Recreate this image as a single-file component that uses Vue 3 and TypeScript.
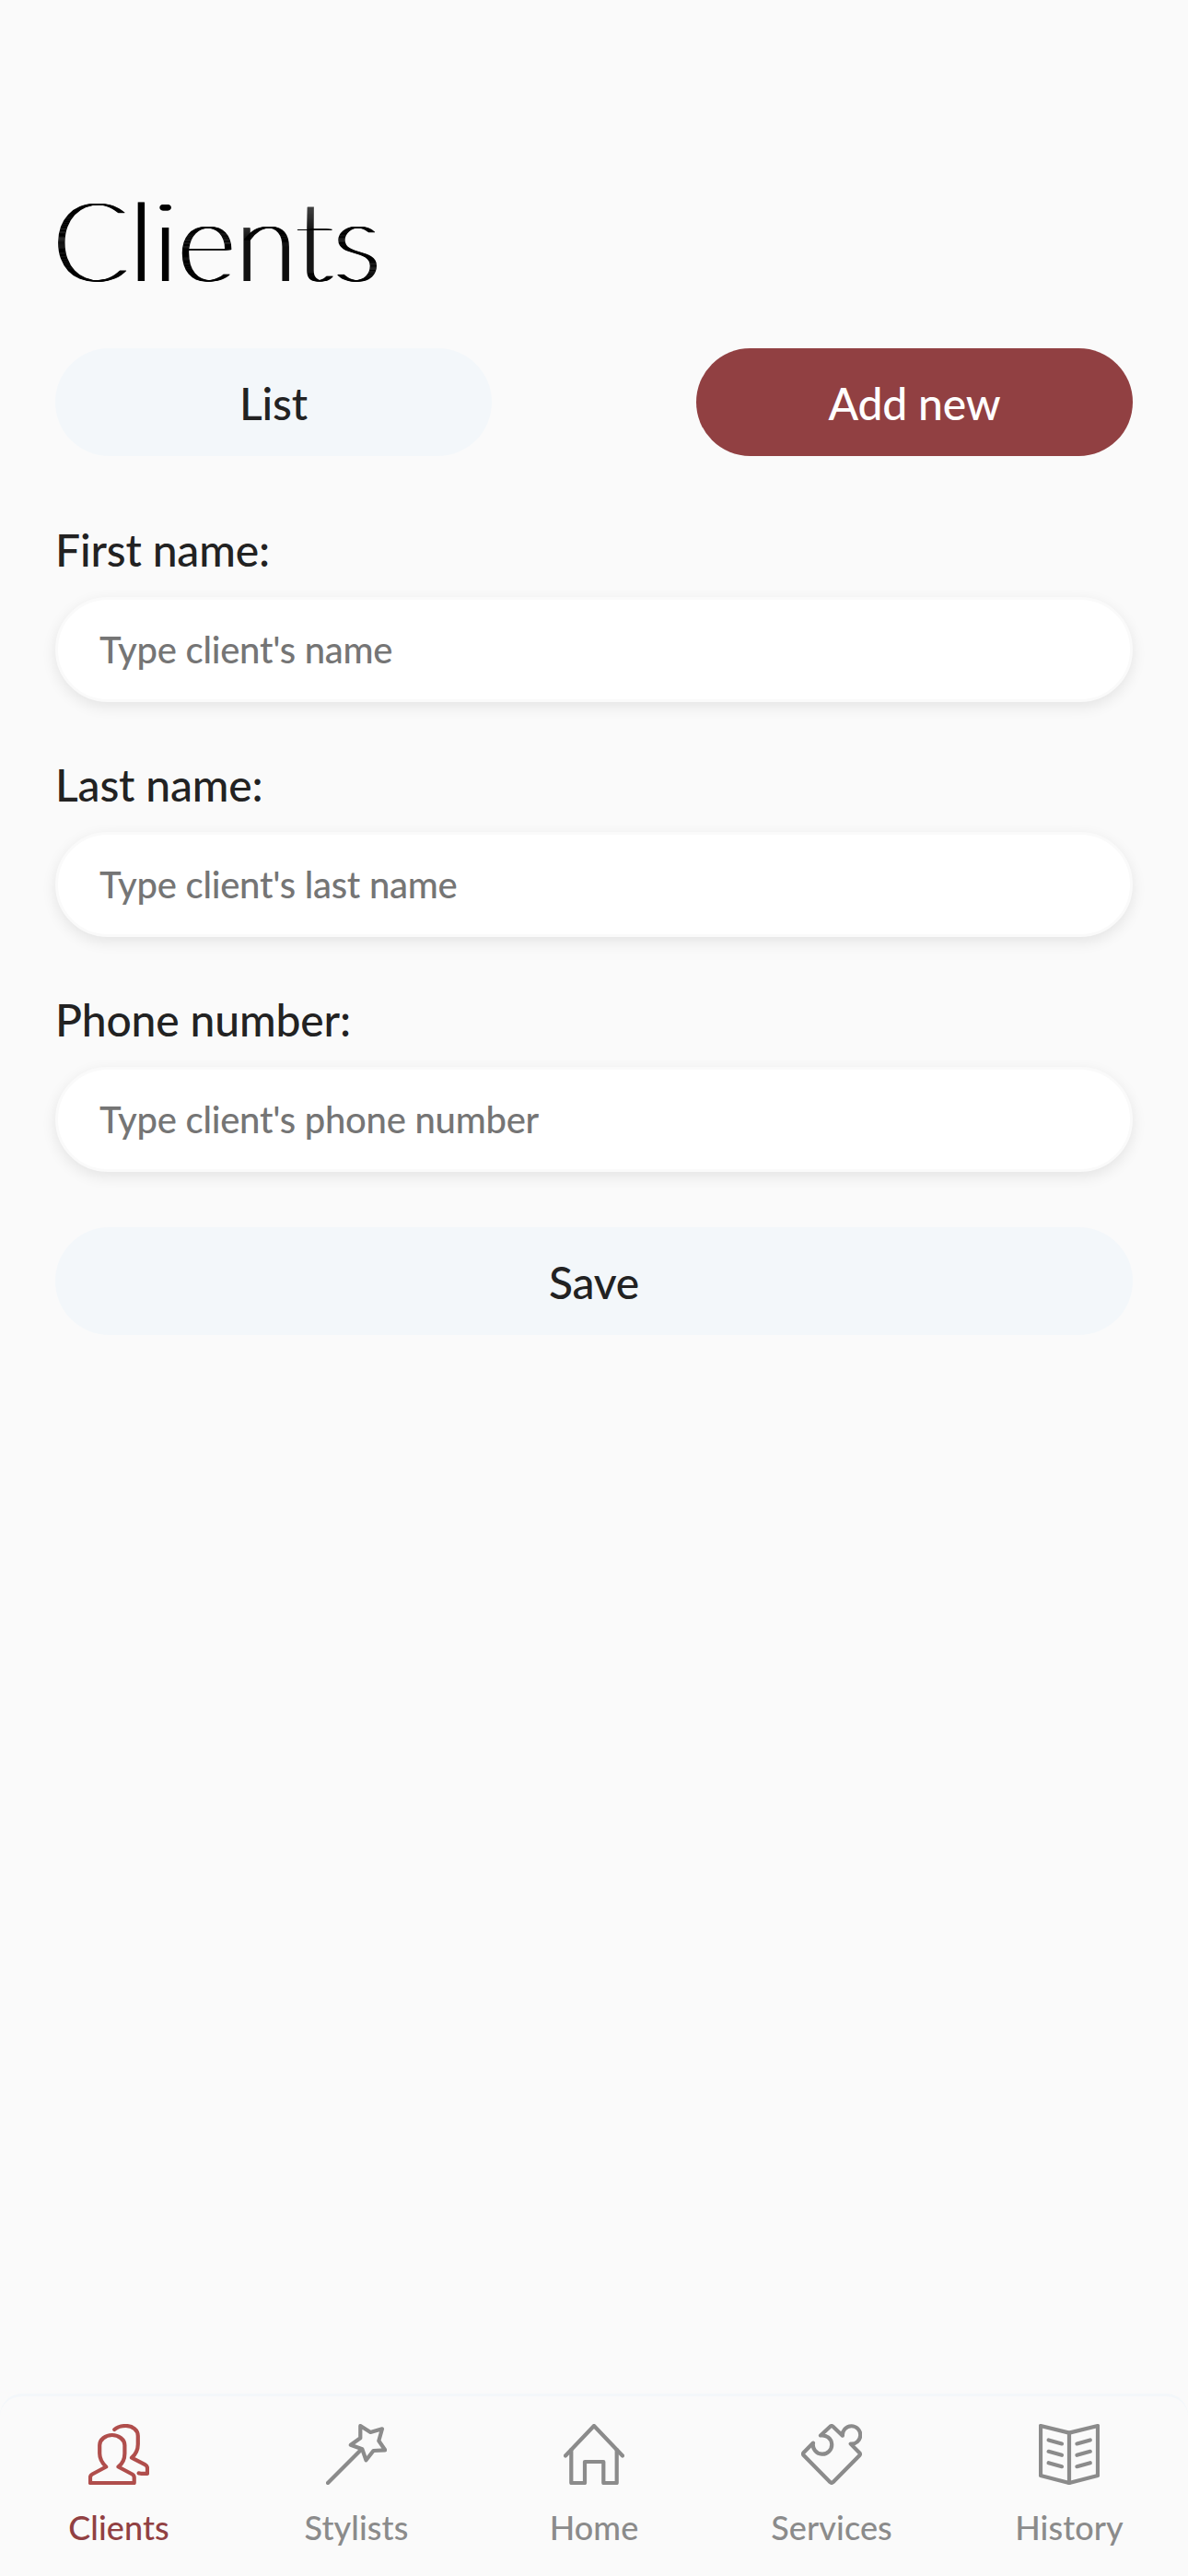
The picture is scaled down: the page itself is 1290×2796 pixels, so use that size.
<script setup lang="ts">
import { ref } from 'vue'

interface Field {
  id: string
  label: string
  placeholder: string
}

interface Tab {
  name: string
  paths: string[]
}

const fields: Field[] = [
  { id: 'first', label: 'First name:', placeholder: "Type client's name" },
  { id: 'last', label: 'Last name:', placeholder: "Type client's last name" },
  { id: 'phone', label: 'Phone number:', placeholder: "Type client's phone number" },
]

const tabs: Tab[] = [
  {
    name: 'Clients',
    paths: [
      'M25.7 12C33 12 39.4 17 39.4 23V32C39.4 38 36.5 43.5 32.5 46.5L47.5 54.5Q49.7 55.8 49.7 58V64H2V58Q2 55.8 4.2 54.5L19.2 46.5C15 42.5 12.2 38 12.2 32V23C12.2 17 18.5 12 25.7 12Z',
      'M28.3 6C31 3.6 35 2 40.7 2C48 2 53.8 6.5 53.8 13V22C53.8 28 50.8 33.4 47 36.7L61.5 44.2Q64 45.5 64 48V53.8H56.8L54.6 53.4',
    ],
  },
  {
    name: 'Stylists',
    paths: [
      'M37.3 2L48.3 9L61 5.3L57.3 18.3L64.2 28.3L51.5 29L43.5 39.3L39.3 27.3L26.8 22.8L37.3 15.3Z',
      'M38 28L2 64',
    ],
  },
  {
    name: 'Home',
    paths: ['M2 34.5L33 2L64 34.5', 'M8.3 28V64H23V41H43.3V64H57.7V28'],
  },
  {
    name: 'Services',
    paths: [
      'M13 20.5L2.7 31Q1.4 32.5 2.7 34L31.5 63.2Q33 64.5 34.5 63.2L63.2 34.3Q64.6 32.8 63.2 31.3L53.7 21.6A9.7 9.7 0 1 0 44.9 12.7L34.5 2.8Q33 1.4 31.5 2.7L21 12.5A10.2 10.2 0 1 1 13 20.5Z',
    ],
  },
  {
    name: 'History',
    paths: [
      'M33 9.6L2 2V56L33 64L64 56V2Z',
      'M33 9.6V64',
      'M10.6 17.4L25 21.4M10.6 29.8L25 33.8M10.6 42.2L25 46.2',
      'M41.4 21.4L55.8 17.4M41.4 33.8L55.8 29.8M41.4 46.2L55.8 42.2',
    ],
  },
]

const active = ref('Clients')
</script>

<template>
  <div class="screen">
    <main class="content">
      <h1 class="title">Clients</h1>
      <div class="switch">
        <button class="btn half">List</button>
        <button class="btn half primary">Add new</button>
      </div>
      <form class="form" @submit.prevent>
        <div v-for="f in fields" :key="f.id" class="field">
          <label class="label" :for="f.id">{{ f.label }}</label>
          <input :id="f.id" class="input" type="text" :placeholder="f.placeholder" />
        </div>
        <button class="btn">Save</button>
      </form>
    </main>
    <nav class="tabs">
      <a
        v-for="t in tabs"
        :key="t.name"
        class="tab"
        :class="{ active: t.name === active }"
        @click="active = t.name"
      >
        <svg class="icon" viewBox="0 0 66 66">
          <path v-for="(d, i) in t.paths" :key="i" :d="d" />
        </svg>
        <span class="caption">{{ t.name }}</span>
      </a>
    </nav>
  </div>
</template>

<style>
body {
  margin: 0;
  background: #fafafa;
}
</style>

<style scoped>
.screen {
  box-sizing: border-box;
  width: 1290px;
  height: 2796px;
  display: flex;
  flex-direction: column;
  background: #fafafa;
  color: #222;
  font-family: Lato, "Liberation Sans", sans-serif;
  font-weight: 500;
}

.content {
  flex: 1;
  padding: 187px 60px 0;
}

/* Sideways shadows thicken only the vertical stems, for a high-contrast display look */
.title {
  margin: 0 0 0 -5px;
  height: 191px;
  line-height: 144px;
  font-size: 119px;
  font-weight: 100;
  letter-spacing: 1.6px;
  color: #000;
  text-shadow: 1px 0 #000, 2px 0 #000, 3px 0 #000, 4px 0 #000, 5px 0 #000, 6px 0 #000;
}

.switch {
  display: flex;
  justify-content: space-between;
}

.btn {
  display: block;
  width: 100%;
  height: 117px;
  margin: 0;
  padding: 3px 0 0;
  border: 0;
  border-radius: 60px;
  background: #f3f7fa;
  color: #222;
  font: inherit;
  font-size: 48px;
  line-height: 58px;
  letter-spacing: -0.2px;
}

.half {
  width: 474px;
}

.primary {
  background: #914042;
  color: #fff;
}

.form {
  margin-top: 73px;
}

.field {
  display: flex;
  flex-direction: column;
  height: 255px;
}

.label {
  height: 80px;
  line-height: 58px;
  font-size: 48px;
  letter-spacing: -0.15px;
}

.field + .btn {
  margin-top: -1px;
}

.input {
  box-sizing: border-box;
  width: 100%;
  height: 114px;
  padding: 0 45px;
  border: 3px solid #fafafa;
  border-radius: 60px;
  background: #fff;
  box-shadow: 0 5px 16px rgba(0, 0, 0, 0.09);
  color: #222;
  font: inherit;
  font-size: 40px;
  letter-spacing: -0.26px;
  outline: none;
}

.input::placeholder {
  color: #757575;
  opacity: 1;
}

.tabs {
  box-sizing: border-box;
  height: 198px;
  display: flex;
  border-top: 3px solid #f3f7fa;
  border-radius: 24px 24px 0 0;
}

.tab {
  flex: 1;
  display: flex;
  flex-direction: column;
  align-items: center;
  padding-top: 30px;
  color: #8b8b8b;
}

.tab.active {
  color: #914042;
}

.icon {
  width: 66px;
  height: 66px;
  fill: none;
  stroke: #8b8b8b;
  stroke-width: 4.2;
  stroke-linecap: round;
  stroke-linejoin: round;
}

.active .icon {
  stroke: #b04e4c;
}

.caption {
  margin-top: 24px;
  font-size: 36px;
  line-height: 44px;
  letter-spacing: 0.1px;
}
</style>
